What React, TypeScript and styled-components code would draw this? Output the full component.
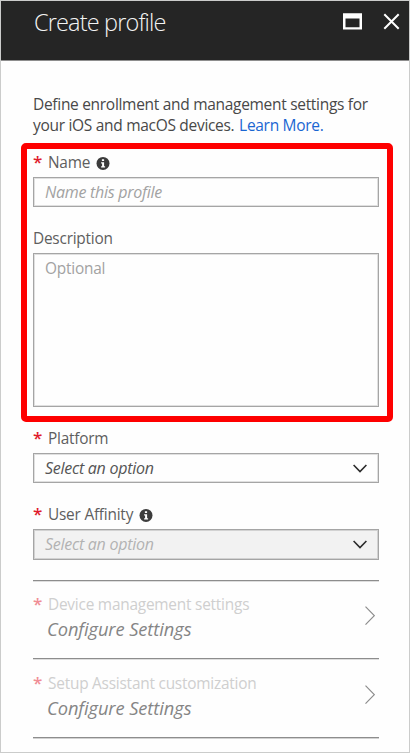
import React from "react";
import styled, { createGlobalStyle } from "styled-components";

const GlobalStyle = createGlobalStyle`
  *, *::before, *::after { box-sizing: border-box; }
  body { margin: 0; background: #fff; font-family: "Open Sans", "Noto Sans", sans-serif; }
`;

const Blade = styled.main`
  width: 410px;
  height: 753px;
  border: 1px solid #cbcccb;
  background: #fefefe;
  overflow: hidden;
`;

const Header = styled.header`
  height: 60px;
  display: flex;
  align-items: flex-start;
  padding: 5px 9px 0 33px;
  background: #252525;
  border-bottom: 1px solid #8e8e8e;
  color: #f4f4f4;
`;

const Title = styled.h1`
  flex: 1;
  margin: 0;
  font-size: 23.5px;
  line-height: 32px;
  font-weight: 300;
  letter-spacing: -0.85px;
`;

const WindowActions = styled.div`
  display: flex;
  align-items: center;
  gap: 21px;
  padding-top: 7px;
`;

const Intro = styled.p`
  margin: 33px 0 0 32px;
  height: 49px;
  font-size: 15.5px;
  line-height: 21px;
  color: #484848;
  white-space: nowrap;
`;

const IntroLine = styled.span`
  display: block;
  letter-spacing: -0.3px;
`;

const Link = styled.a`
  margin-left: 1px;
  color: #1a66d2;
  text-decoration: none;
`;

const Highlight = styled.section`
  width: 372px;
  height: 279px;
  margin-left: 20px;
  padding: 3px 8px 0 6px;
  border: 6px solid #fe0000;
  border-radius: 5px;
`;

const FieldGroup = styled.section`
  margin: 6px 30px 0 32px;
`;

const LabelRow = styled.div<{ $gap?: number; $faded?: boolean }>`
  display: flex;
  height: 20px;
  margin-top: ${(p) => p.$gap ?? 0}px;
  line-height: 21px;
  font-size: 15.4px;
  color: ${(p) => (p.$faded ? "#cfcfcf" : "#5f5f5f")};
  white-space: nowrap;
`;

const Star = styled.span<{ $faded?: boolean }>`
  width: 15px;
  line-height: 20px;
  font-size: 17px;
  font-weight: 600;
  color: ${(p) => (p.$faded ? "#f08d95" : "#e01b2c")};
`;

const Label = styled.span`
  letter-spacing: -0.22px;
`;

const InfoMark = styled.svg`
  margin: 4px 0 0 6px;
`;

const Field = styled.div<{ $height: number; $disabled?: boolean; $tone: string; $roman?: boolean }>`
  display: flex;
  justify-content: space-between;
  height: ${(p) => p.$height}px;
  margin-top: 5px;
  padding: 4px 11px 0 11px;
  border: 1px solid #a5a5a5;
  box-shadow: inset 0 0 0 1px ${(p) => (p.$disabled ? "#d2d2d2" : "#e0e0e0")};
  background: ${(p) => (p.$disabled ? "#f2f2f2" : "#fefefe")};
  color: ${(p) => p.$tone};
  font-size: ${(p) => (p.$roman ? 15.4 : 16)}px;
  font-style: ${(p) => (p.$roman ? "normal" : "italic")};
  line-height: 21px;
  letter-spacing: ${(p) => (p.$roman ? -0.2 : -0.27)}px;
`;

const SelectArrow = styled.svg`
  margin-top: 6px;
`;

const SettingsList = styled.div`
  margin-top: 20px;
  border-top: 1px solid #8d8d8d;
`;

const SettingsRow = styled.div<{ $height: number; $top: number }>`
  display: flex;
  justify-content: space-between;
  height: ${(p) => p.$height}px;
  padding: ${(p) => p.$top}px 4px 0 0;
  border-bottom: 1px solid #8d8d8d;
  box-shadow: 0 1px 0 #d2d2d2, inset 0 1px 0 #dedede;
`;

const SettingsAction = styled.div`
  margin: 3px 0 0 14px;
  font-size: 18.3px;
  line-height: 24px;
  font-style: italic;
  color: #858585;
  letter-spacing: -0.08px;
`;

const RowArrow = styled.svg`
  margin-top: 12px;
`;

const Info = () => (
  <InfoMark width="14" height="14" viewBox="0 0 14 14">
    <circle cx="7" cy="7.4" r="6.5" fill="#3c3c3c" />
    <path d="M5.9 3.2h2.2v1.9H5.9zM5.1 6.2h3v4h1v1.2h-4v-1.2h1V7.4h-1z" fill="#fff" />
  </InfoMark>
);

const ChevronDown = () => (
  <SelectArrow width="14" height="9" viewBox="0 0 14 9" fill="none">
    <path d="M0.6 1L7 7.5L13.4 1" stroke="#2b2b2b" strokeWidth="1.6" />
  </SelectArrow>
);

const ChevronRight = () => (
  <RowArrow width="10" height="20" viewBox="0 0 10 20" fill="none">
    <path d="M0.5 0.7L9.3 9.7L0.5 18.7" stroke="#8c8c8c" strokeWidth="1.2" />
  </RowArrow>
);

export default function App() {
  return (
    <>
      <GlobalStyle />
      <Blade>
        <Header>
          <Title>Create profile</Title>
          <WindowActions>
            <svg width="19" height="17" viewBox="0 0 19 17">
              <path fillRule="evenodd" fill="#fff" d="M0 0.3h19v16.3H0zM2.5 5.5v8.8h14V5.5z" />
            </svg>
            <svg width="17" height="17" viewBox="0 0 17 17">
              <path d="M1.3 1.3l14.4 14.4M15.7 1.3L1.3 15.7" stroke="#fff" strokeWidth="2" />
            </svg>
          </WindowActions>
        </Header>
        <Intro>
          <IntroLine>Define enrollment and management settings for</IntroLine>
          <IntroLine>
            your iOS and macOS devices. <Link>Learn More.</Link>
          </IntroLine>
        </Intro>
        <Highlight>
          <LabelRow>
            <Star>*</Star>
            <Label>Name</Label>
            <Info />
          </LabelRow>
          <Field $height={30} $tone="#a2a2a2">Name this profile</Field>
          <LabelRow $gap={21}>
            <Label>Description</Label>
          </LabelRow>
          <Field $height={154} $tone="#a2a2a2" $roman>Optional</Field>
        </Highlight>
        <FieldGroup>
          <LabelRow>
            <Star>*</Star>
            <Label>Platform</Label>
          </LabelRow>
          <Field $height={30} $tone="#555">
            Select an option
            <ChevronDown />
          </Field>
          <LabelRow $gap={21}>
            <Star>*</Star>
            <Label>User Affinity</Label>
            <Info />
          </LabelRow>
          <Field $height={31} $tone="#b2b2b2" $disabled>
            Select an option
            <ChevronDown />
          </Field>
          <SettingsList>
            <SettingsRow $height={78} $top={13}>
              <div>
                <LabelRow $faded>
                  <Star $faded>*</Star>
                  <Label>Device management settings</Label>
                </LabelRow>
                <SettingsAction>Configure Settings</SettingsAction>
              </div>
              <ChevronRight />
            </SettingsRow>
            <SettingsRow $height={79} $top={14}>
              <div>
                <LabelRow $faded>
                  <Star $faded>*</Star>
                  <Label>Setup Assistant customization</Label>
                </LabelRow>
                <SettingsAction>Configure Settings</SettingsAction>
              </div>
              <ChevronRight />
            </SettingsRow>
          </SettingsList>
        </FieldGroup>
      </Blade>
    </>
  );
}
